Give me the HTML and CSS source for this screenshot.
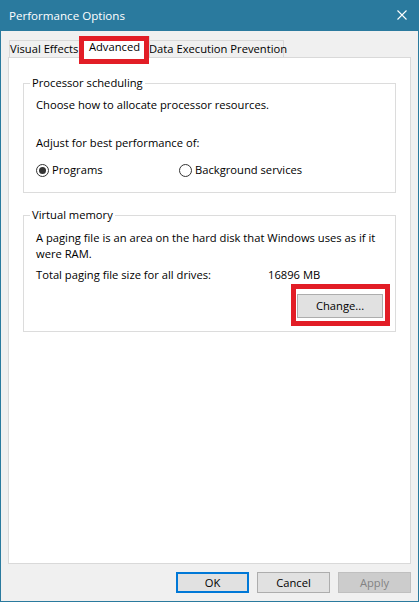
FILE: index.html
```html
<!DOCTYPE html>
<html>
<head>
<meta charset="utf-8">
<title>Performance Options</title>
<link rel="stylesheet" href="styles.css">
</head>
<body>
<div class="window">
  <div class="titlebar">
    <span class="title">Performance Options</span>
    <svg class="close" width="10" height="10" viewBox="0 0 10 10"><path d="M0.5 0.5 L9.5 9.5 M9.5 0.5 L0.5 9.5" stroke="#fff" stroke-width="1.1" fill="none"/></svg>
  </div>
  <div class="body">
    <div class="tabs">
      <div class="tab t1">Visual Effects</div>
      <div class="tab t2 selected">Advanced<span class="mark mark-tab"></span></div>
      <div class="tab t3">Data Execution Prevention</div>
    </div>
    <div class="panel">
      <fieldset class="group proc">
        <legend>Processor scheduling</legend>
        <p class="line">Choose how to allocate processor resources.</p>
        <p class="line adjust">Adjust for best performance of:</p>
        <div class="radios">
          <label class="radio"><span class="dot on"></span>Programs</label>
          <label class="radio"><span class="dot"></span>Background services</label>
        </div>
      </fieldset>
      <fieldset class="group vm">
        <legend>Virtual memory</legend>
        <p class="line nowrap">A paging file is an area on the hard disk that Windows uses as if it<br>were RAM.</p>
        <div class="total"><span class="total-label">Total paging file size for all drives:</span><span>16896 MB</span></div>
        <div class="change-row"><button class="btn change">Change...<span class="mark mark-btn"></span></button></div>
      </fieldset>
    </div>
    <div class="footer">
      <button class="btn ok">OK</button>
      <button class="btn">Cancel</button>
      <button class="btn disabled">Apply</button>
    </div>
  </div>
</div>
</body>
</html>
```
FILE: styles.css
```css
* { box-sizing: border-box; }
html, body { margin: 0; padding: 0; background: #fff; }
body {
  font-family: "Open Sans", "Noto Sans", "Liberation Sans", sans-serif;
  font-size: 11.2px;
  line-height: 16px;
  color: #000;
}
.window {
  width: 419px;
  height: 602px;
  border: 1px solid #2a7a9e;
  background: #f0f0f0;
  display: flex;
  flex-direction: column;
}
.titlebar {
  height: 30px;
  background: #2a7a9e;
  display: flex;
  align-items: center;
  justify-content: space-between;
  padding: 0 11px 1px 8px;
  color: #fff;
}
.title { font-size: 11.6px; }
.close { display: block; margin-top: -1px; }
.body {
  flex: 1;
  display: flex;
  flex-direction: column;
  padding: 5px 7px 8px 7px;
}
.tabs {
  height: 21px;
  display: flex;
  align-items: flex-end;
  padding-left: 1px;
  position: relative;
  z-index: 2;
}
.tab {
  height: 17px;
  border: 1px solid #d9d9d9;
  border-bottom: none;
  background: #f0f0f0;
  text-align: center;
  white-space: nowrap;
  line-height: 15px;
}
.t1 { width: 72px; padding-right: 2px; }
.t2 { width: 71px; margin-left: -2px; }
.t3 { width: 136px; margin-left: -2px; }
.tab.selected {
  height: 22px;
  margin-bottom: -1px;
  background: #fff;
  position: relative;
  z-index: 3;
  padding-top: 2px;
}
.mark {
  position: absolute;
  border: 5px solid #e21d26;
  pointer-events: none;
}
.mark-tab { left: -1px; top: -1px; right: 0; bottom: -6px; }
.panel {
  flex: 1;
  background: #fff;
  border: 1px solid #d9d9d9;
  padding: 17px 14px 0 14px;
}
.group {
  margin: 0;
  border: 1px solid #dcdcdc;
  padding: 6px 12px 14px 12px;
  min-width: 0;
}
.group legend {
  padding: 0 2px;
  margin-left: -6px;
  line-height: 16px;
}
.line { margin: 0; }
.nowrap { white-space: nowrap; }
.adjust { margin-top: 22px; }
.radios {
  margin-top: 11px;
  display: grid;
  grid-template-columns: 143px auto;
}
.radio { display: flex; align-items: center; }
.dot {
  width: 13px;
  height: 13px;
  border: 1px solid #333;
  border-radius: 50%;
  margin-right: 3px;
  display: flex;
  align-items: center;
  justify-content: center;
  background: #fff;
}
.dot.on::after {
  content: "";
  width: 7px;
  height: 7px;
  border-radius: 50%;
  background: #333;
}
.vm { margin-top: 14px; padding-top: 7px; padding-bottom: 13px; }
.total { margin-top: 5px; display: flex; }
.total-label { width: 232px; }
.change-row { display: flex; justify-content: flex-end; margin-top: 11px; }
.btn {
  font-family: inherit;
  font-size: 11.2px;
  line-height: 16px;
  height: 21px;
  width: 73px;
  padding: 0;
  background: #e1e1e1;
  border: 1px solid #adadad;
  color: #000;
  border-radius: 0;
}
.change { width: 86px; height: 24px; position: relative; }
.mark-btn { left: -7px; top: -11px; right: -8px; bottom: -9px; }
.footer {
  margin-top: 8px;
  display: flex;
  justify-content: flex-end;
  gap: 8px;
}
.ok { border-color: #0078d7; box-shadow: inset 0 0 0 1px #0078d7; }
.disabled { background: #cccccc; border-color: #bfbfbf; color: #838383; }
```
